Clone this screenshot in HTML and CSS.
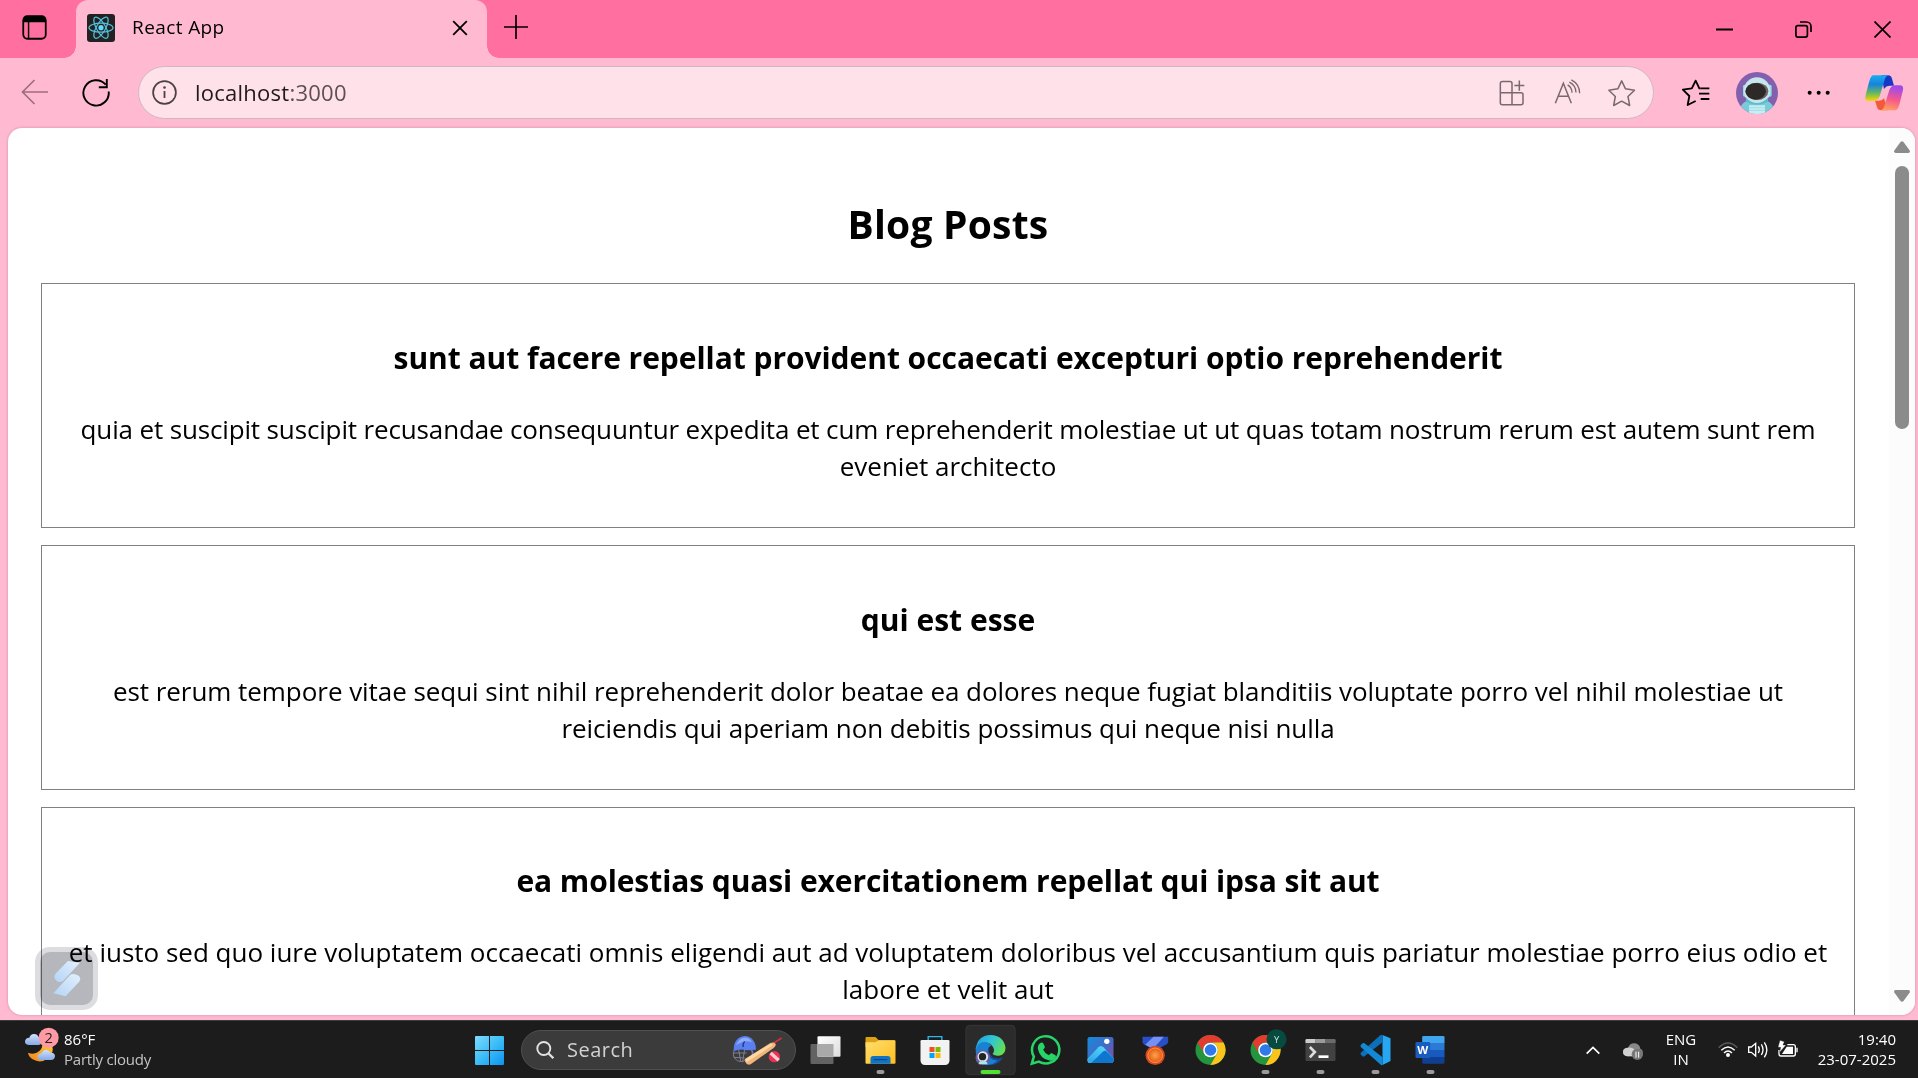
FILE: index.html
```html
<!DOCTYPE html>
<html lang="en">
<head>
<meta charset="utf-8">
<title>React App</title>
<link rel="stylesheet" href="styles.css">
</head>
<body>
<div class="browser">
  <header class="tabstrip">
    <svg class="tab-actions" viewBox="0 0 24 24"><rect x="1.2" y="1.2" width="21.6" height="21.6" rx="4" fill="none" stroke="#000" stroke-width="1.7"/><path d="M1 7V5a4 4 0 0 1 4-4h14a4 4 0 0 1 4 4v2z"/><path d="M6.3 6v17" stroke="#000" stroke-width="1.4"/></svg>
    <div class="tab">
      <svg class="favicon" viewBox="0 0 28 28"><rect width="28" height="28" rx="3" fill="#222"/><g fill="none" stroke="#53c1de" stroke-width="1.2"><ellipse cx="14" cy="13.7" rx="12" ry="4.5"/><ellipse cx="14" cy="13.7" rx="12" ry="4.5" transform="rotate(60 14 13.7)"/><ellipse cx="14" cy="13.7" rx="12" ry="4.5" transform="rotate(120 14 13.7)"/></g><circle cx="14" cy="13.7" r="2.6" fill="#61dafb"/></svg>
      <span class="tab-title">React App</span>
      <svg class="tab-close" viewBox="0 0 16 16"><path d="M1.2 1.2l13.6 13.6M14.8 1.2L1.2 14.8" stroke="#000" stroke-width="1.8"/></svg>
    </div>
    <svg class="new-tab" viewBox="0 0 24 24"><path d="M12 0v24M0 12h24" stroke="#000" stroke-width="1.7"/></svg>
    <div class="window-controls">
      <svg viewBox="0 0 17 17"><path d="M0 8.5h17" stroke="#000" stroke-width="2"/></svg>
      <svg viewBox="0 0 17 17"><g fill="none" stroke="#000" stroke-width="1.7"><rect x=".9" y="4.6" width="11.5" height="11.5" rx="2"/><path d="M5 1h6.500a4.500 4.500 0 0 1 4.500 4.500v5.500"/></g></svg>
      <svg viewBox="0 0 17 17"><path d="M.5.5l16 16M16.500.5l-16 16" stroke="#000" stroke-width="1.7"/></svg>
    </div>
  </header>

  <div class="toolbar">
    <svg class="back" viewBox="0 0 28 26"><path d="M27 13H1.500M13.500 1L1.500 13l12 12" fill="none" stroke="#9c6f80" stroke-width="1.7"/></svg>
    <svg class="reload" viewBox="0 0 28 28"><path d="M23.700 5.600A12.700 12.700 0 1 0 26.700 12.500M24.800 0v8.300h-8" fill="none" stroke="#000" stroke-width="1.9"/></svg>
    <div class="address">
      <svg class="info" viewBox="0 0 25 25"><circle cx="12.500" cy="12.500" r="11.400" fill="none" stroke="#4a4045" stroke-width="1.7"/><circle cx="12.500" cy="7.500" r="1.300" fill="#4a4045"/><path d="M12.500 11v7" stroke="#4a4045" stroke-width="1.8"/></svg>
      <span class="url">localhost<span class="port">:3000</span></span>
      <svg class="slot" viewBox="72 199.500 165 153"><g fill="none" stroke="#7a6870" stroke-width="4.500"><path d="M156 277V249q0-6-6-6h-23q-6 0-6 6v58q0 6 6 6h56q6 0 6-6v-24q0-6-6-6h-62M156 277v36M178 240v31M163 255h30"/></g></svg>
      <svg class="slot" viewBox="237 199.500 165 153"><g fill="none" stroke="#7a6870" stroke-width="4.500"><path d="M286 308l24-60 24 60M295 287h30"/><path d="M323 253q13 8 13 24M328 245q19 9 20 31M334 238q24 12 25 40" stroke-width="4"/></g></svg>
      <svg class="slot" viewBox="402 199.500 165 153"><path d="M485 241l11.500 24 27 4-19.500 19 5 27-24-13-24 13 5-27-19.500-19 27-4z" fill="none" stroke="#7a6870" stroke-width="4.500" stroke-linejoin="round"/></svg>
    </div>
    <div class="actions">
      <svg class="w61" viewBox="615 174 183 210"><g fill="none" stroke="#000" stroke-width="5.500" stroke-linejoin="round"><path d="M722 265h-4l-11-23-11.500 23-27 4 19.500 19-5 27 24-12"/><path d="M722 265h26M717 281h31M722 297h26"/></g></svg>
      <svg class="w62" viewBox="798 174 186 210"><defs><clipPath id="av"><circle cx="891" cy="279" r="63"/></clipPath></defs><g clip-path="url(#av)"><path d="M828 216h126v126H828z" fill="#8360ad"/><path d="M838 345q0-40 32-44h42q32 4 34 44z" fill="#78cbd8"/><rect x="849" y="254" width="14" height="36" rx="5" fill="#8bdce6"/><rect x="920" y="254" width="15" height="36" rx="5" fill="#8bdce6"/><circle cx="891" cy="272" r="40" fill="#c6e6ee"/><path d="M858 293q33 32 66 0v12q-33 18-66 0z" fill="#62bacb"/><ellipse cx="892" cy="274" rx="33" ry="26" fill="#6b6663"/><ellipse cx="887" cy="274" rx="31" ry="25" fill="#2d2927"/><path d="M867 316h48v30h-48z" fill="#c6eef3"/><path d="M867 323h48M867 331h48" stroke="#8fd4df" stroke-width="2"/></g></svg>
      <svg class="w61" viewBox="984 174 183 210"><circle cx="1049" cy="278" r="6"/><circle cx="1076" cy="278" r="6"/><circle cx="1103" cy="278" r="6"/></svg>
      <svg class="w69" viewBox="1167 174 207 210"><defs><linearGradient id="c1" x1="0" y1="0" x2="0" y2="1"><stop offset="0" stop-color="#17aef0"/><stop offset=".35" stop-color="#1683dc"/><stop offset=".7" stop-color="#6ab95c"/><stop offset="1" stop-color="#ffd500"/></linearGradient><linearGradient id="c2" x1=".3" y1="0" x2=".1" y2="1"><stop offset="0" stop-color="#a04be8"/><stop offset=".5" stop-color="#f7588c"/><stop offset="1" stop-color="#ffa95c"/></linearGradient></defs><path d="M1264 226h20q9 0 12 10l6 21h-12q-12 0-18 10z" fill="#1737c4"/><path d="M1284 331h-21q-9 0-12-10l-6-19h12q10 0 15-7z" fill="#f25b38"/><path d="M1240 226h46q-9 2-12 13l-15 50q-5 14-19 14h-14q-13 0-10-14l12-46q5-17 12-17z" fill="url(#c1)"/><path d="M1306 331h-45q9-2 12-13l15-48q5-14 19-14h12q13 0 10 14l-11 44q-5 17-12 17z" fill="url(#c2)"/></svg>
    </div>
  </div>

  <div class="viewport">
    <main class="blog">
      <h1>Blog Posts</h1>
      <article class="post">
        <h3 class="snug">sunt aut facere repellat provident occaecati excepturi optio reprehenderit</h3>
        <p><span class="tight">quia et suscipit suscipit recusandae consequuntur expedita et cum reprehenderit molestiae ut ut quas totam nostrum rerum est autem sunt rem</span><br><span>eveniet architecto</span></p>
      </article>
      <article class="post">
        <h3>qui est esse</h3>
        <p><span class="snug">est rerum tempore vitae sequi sint nihil reprehenderit dolor beatae ea dolores neque fugiat blanditiis voluptate porro vel nihil molestiae ut</span><br><span class="snug">reiciendis qui aperiam non debitis possimus qui neque nisi nulla</span></p>
      </article>
      <article class="post">
        <h3 class="close">ea molestias quasi exercitationem repellat qui ipsa sit aut</h3>
        <p><span>et iusto sed quo iure voluptatem occaecati omnis eligendi aut ad voluptatem doloribus vel accusantium quis pariatur molestiae porro eius odio et</span><br><span>labore et velit aut</span></p>
      </article>
    </main>
    <div class="scrollbar">
      <svg viewBox="0 0 16 12"><path d="M6.500 1q1.500-1.500 3 0l6.200 8.500q.8 2.500-1.500 2.500H1.800q-2.300 0-1.500-2.500z" fill="#8b8b8b"/></svg>
      <div class="thumb"></div>
      <svg class="down" viewBox="0 0 16 12"><path d="M6.500 11q1.500 1.500 3 0l6.200-8.500q.8-2.500-1.500-2.500H1.800q-2.300 0-1.500 2.500z" fill="#8b8b8b"/></svg>
    </div>
  </div>
</div>

<div class="widget"><svg viewBox="105 81 188 188"><defs><linearGradient id="wg" x1="0" y1="1" x2="1" y2="0"><stop offset="0" stop-color="#b4d4f7"/><stop offset="1" stop-color="#e2f0fd"/></linearGradient></defs><path d="M203 123l36 5-49 53q-8 8-19 2-14-10-4-23z" fill="url(#wg)"/><path d="M196 228l-36-9 49-54q7-6 20-1 17 7 8 21z" fill="url(#wg)"/></svg></div>

<footer class="taskbar">
  <div class="weather">
    <svg viewBox="72 300 108 174"><defs><linearGradient id="cl" x1="0" y1="0" x2="0" y2="1"><stop offset="0" stop-color="#d4e2fb"/><stop offset="1" stop-color="#86a9e8"/></linearGradient><linearGradient id="mo" x1="1" y1="0" x2="0" y2="1"><stop offset="0" stop-color="#ffc83c"/><stop offset="1" stop-color="#f0851c"/></linearGradient></defs><path d="M156 375q8 25-12 40-22 17-46 3-12-8-14-20 20 8 34-5 10-9 9-21z" fill="url(#mo)"/><path d="M86 375q-12-1-11-11t13-11q4-12 15-11 9 0 13 9 11 2 10 13-2 11-11 11z" fill="url(#cl)"/><path d="M123 420q-11-1-10-10t12-10q4-11 14-11 9 1 12 9 14-1 14 11-1 11-12 11z" fill="url(#cl)"/><circle cx="146" cy="353" r="30" fill="#ff99a4"/><text x="146" y="369" font-size="44" text-anchor="middle" fill="#222" class="badge">2</text></svg>
    <div class="weather-text"><span>86°F</span><span class="dim">Partly cloudy</span></div>
  </div>

  <div class="apps">
    <svg class="start" viewBox="0 0 29 29"><defs><linearGradient id="wn" x1="0" y1="0" x2="1" y2="1"><stop offset="0" stop-color="#7fdcfd"/><stop offset=".5" stop-color="#3cbdf7"/><stop offset="1" stop-color="#0c93f0"/></linearGradient></defs><path d="M1 0h13v14H0V1q0-1 1-1zM15 0h13q1 0 1 1v13H15zM0 15h14v14H1q-1 0-1-1zM15 15h14v13q0 1-1 1H15z" fill="url(#wn)"/></svg>
    <div class="search">
      <svg class="lens" viewBox="0 0 18 18"><circle cx="7.800" cy="7.500" r="6.500" fill="none" stroke="#e2e2e2" stroke-width="1.900"/><path d="M12.300 12.200l5 5" stroke="#e2e2e2" stroke-width="2.300"/></svg>
      <span class="search-label">Search</span>
      <svg class="cricket" viewBox="843 75 156 96"><g fill="none" stroke="#7e7f95" stroke-width="3"><path d="M852 124q-4 12 0 22 10 14 26 12l14-8M852 132h38M852 145l32 2M866 122l6 34M884 120l-6 38"/></g><path d="M851 122q0-24 15-35 20-12 38 1 14 12 14 34l-28 2q-20-6-38 2z" fill="#5b7ff0"/><path d="M858 108q9-21 25-22 17-1 23 14-19-10-48 8z" fill="#8eabf8"/><path d="M884 97q-7 8-4 17" stroke="#213b9a" stroke-width="4" fill="none"/><path d="M903 122q10 8 0 25l-14 8" fill="none" stroke="#6777c8" stroke-width="5"/><path d="M971 102l24-15" stroke="#d32e43" stroke-width="5"/><path d="M884 151l77-49q11-4 16 3 2 6-6 12l-69 49q-15 5-18-15z" fill="#efb579"/><path d="M886 150l77-46 6 4-79 52z" fill="#ffd7a3"/><circle cx="973" cy="143" r="17" fill="#e93250"/><path d="M962 132l24 22" stroke="#ffc9d4" stroke-width="10"/></svg>
    </div>
    <svg class="app" viewBox="1045.500 30 165 174"><defs><linearGradient id="tv" x1="0" y1="0" x2="1" y2="1"><stop offset="0" stop-color="#fff"/><stop offset="1" stop-color="#dcdcdc"/></linearGradient></defs><rect x="1083" y="102" width="69" height="60" rx="3" fill="#636363"/><rect x="1104" y="79" width="69" height="61" rx="3" fill="url(#tv)"/><path d="M1104 102h48v38h-48z" fill="#a9a9a9"/></svg>
    <svg class="app" viewBox="1210.500 30 165 174"><defs><linearGradient id="fo" x1="0" y1="0" x2="1" y2="1"><stop offset="0" stop-color="#ffdf70"/><stop offset="1" stop-color="#ffbd1c"/></linearGradient></defs><path d="M1248 84q0-3 3-3h27l10 10h48v20h-88z" fill="#dfa112"/><path d="M1248 97h30l10-6h47q3 0 3 3v64q0 3-3 3h-84q-3 0-3-3z" fill="url(#fo)"/><path d="M1263 161v-15q0-8 8-8h44q8 0 8 8v15z" fill="#1173c4"/><path d="M1273 149h40" stroke="#0b3f79" stroke-width="3"/><rect x="1281" y="180" width="24" height="12" rx="6" fill="#9a9a9a"/></svg>
    <svg class="app" viewBox="1375.500 30 165 174"><path d="M1436 96V80h41v16" fill="none" stroke="#28b9ee" stroke-width="4"/><path d="M1413 94q0-4 4-4h79q4 0 4 4v57q0 14-14 14h-59q-14 0-14-14z" fill="#f2f2f2"/><path d="M1440 111h15v15h-15z" fill="#f25022"/><path d="M1458 111h15v15h-15z" fill="#7fba00"/><path d="M1440 129h15v15h-15z" fill="#00a4ef"/><path d="M1458 129h15v15h-15z" fill="#ffb900"/></svg>
    <svg class="app" viewBox="40.500 30 165 174"><defs><linearGradient id="e1" x1="0" y1=".2" x2="1" y2=".6"><stop offset="0" stop-color="#249fe0"/><stop offset=".5" stop-color="#31c5d5"/><stop offset="1" stop-color="#66e04b"/></linearGradient></defs><rect x="49" y="46" width="148" height="148" rx="12" fill="#2b2b2b" stroke="#383838" stroke-width="2.500"/><path d="M118 112q-3 26 18 32 15 4 25-3-13 24-38 24-39-2-45-40z" fill="#124c9b"/><path d="M79 126q-4-30 25-32 14 0 21 13-12 4-10 20 4 26 30 24-16 17-40 13-24-9-26-38z" fill="#1a80d4"/><path d="M79 118q4-42 44-43 40 2 45 38 0 21-20 24-13 1-19-5 8-9 2-20-9-16-27-16-19 1-25 22z" fill="url(#e1)"/><circle cx="100" cy="143" r="22" fill="#73599c"/><circle cx="100" cy="140" r="16" fill="#d5e9f2"/><circle cx="99" cy="140" r="11" fill="#252323"/><path d="M87 163q2-10 8-10h10q8 0 9 10z" fill="#a9e3ec"/><rect x="93" y="180" width="60" height="12" rx="6" fill="#4de133"/></svg>
    <svg class="app" viewBox="205.500 30 165 174"><path d="M247 161l6-21a41 41 0 1 1 15 15z" fill="none" stroke="#26d467" stroke-width="7.500"/><path d="M274 98q5-2 8 3l4 9q1 3-5 9 6 12 17 17l7-7 12 6q4 3 2 7-6 11-17 10-31-5-37-36-1-14 9-18z" fill="#26d467"/></svg>
    <svg class="app" viewBox="370.500 30 165 174"><defs><linearGradient id="ph" x1="0" y1="0" x2="1" y2="1"><stop offset="0" stop-color="#128ddd"/><stop offset=".55" stop-color="#4867c5"/><stop offset="1" stop-color="#8c4c9f"/></linearGradient><linearGradient id="pm" x1="0" y1="1" x2="1" y2="0"><stop offset="0" stop-color="#27a4e6"/><stop offset="1" stop-color="#55d8fc"/></linearGradient></defs><rect x="414" y="81" width="78" height="78" rx="7" fill="url(#ph)"/><path d="M414 147l33-35q7-6 14 0l31 32v8q0 7-7 7h-64q-7 0-7-7z" fill="#45c9f8"/><path d="M415 149l32-37q7-6 14 0l8 8-39 39h-8q-6-1-7-10z" fill="url(#pm)"/><path d="M425 159l35-34q6-5 12 0l20 20v7q0 7-7 7z" fill="#0f76cf"/><circle cx="472" cy="94" r="8" fill="#fff"/></svg>
    <svg class="app" viewBox="535.500 30 165 174"><defs><radialGradient id="md"><stop offset="0" stop-color="#ffa34b"/><stop offset="1" stop-color="#e35a13"/></radialGradient></defs><path d="M579 80h77v15q0 5-5 8l-20 11h-28l-20-11q-4-3-4-8z" fill="#274fc8"/><path d="M612 80h31l-28 32h-14l-14-8z" fill="#7790f3"/><circle cx="617" cy="136" r="29" fill="#d6471a"/><circle cx="617" cy="136" r="22" fill="url(#md)" stroke="#ff9f62" stroke-width="2.500"/></svg>
    <svg class="app" viewBox="700.500 30 165 174"><g id="chrome"><circle cx="783" cy="120" r="45" fill="#24943f"/><path d="M744 97.500a45 45 0 0 1 78 0H783a22 22 0 0 0-19.500 33.500z" fill="#e33b2e"/><path d="M822 97.500a45 45 0 0 1-39 67.500l19.500-34A22.500 22.500 0 0 0 783 97.500z" fill="#fcc31b"/><circle cx="783" cy="120" r="22" fill="#fff"/><circle cx="783" cy="120" r="17.500" fill="#2f79ea"/></g></svg>
    <svg class="app" viewBox="865.500 30 165 174"><use href="#chrome" x="165"/><circle cx="981" cy="88" r="30" fill="#064a40"/><text x="981" y="98" font-size="28" text-anchor="middle" fill="#cfe5df" class="badge">Y</text><rect x="936" y="180" width="24" height="12" rx="6" fill="#9a9a9a"/></svg>
    <svg class="app" viewBox="1030.500 30 165 174"><rect x="1068" y="87" width="90" height="66" rx="4" fill="#424242"/><path d="M1068 99v-8q0-4 4-4h26v12z" fill="#ccc"/><path d="M1098 87h30v12h-30z" fill="#9a9a9a"/><path d="M1128 87h26q4 0 4 4v8h-30z" fill="#6b6b6b"/><path d="M1081 111l15 15-15 16" fill="none" stroke="#ddd" stroke-width="8"/><path d="M1107 140h30" stroke="#fff" stroke-width="8"/><rect x="1101" y="180" width="24" height="12" rx="6" fill="#9a9a9a"/></svg>
    <svg class="app" viewBox="1195.500 30 165 174"><path d="M1299 75l24 10v68l-24 12z" fill="#27a7f2"/><path d="M1299 75v22l-54 42q-3 2-6 0l-5-5q-2-3 0-6l58-52q4-3 7-1z" fill="#0b6fb9"/><path d="M1299 165v-23l-54-42q-3-2-6 0l-5 5q-2 3 0 6l58 52q4 4 7 2z" fill="#1389d6"/><rect x="1266" y="180" width="24" height="12" rx="6" fill="#9a9a9a"/></svg>
    <svg class="app" viewBox="1360.500 30 165 174"><path d="M1418 82q0-4 4-4h59q4 0 4 4v17h-67z" fill="#3fa5ee"/><path d="M1418 99h67v21h-67z" fill="#2b7bd5"/><path d="M1418 120h67v21h-67z" fill="#185abd"/><path d="M1418 141h67v16q0 4-4 4h-59q-4 0-4-4z" fill="#103f91"/><rect x="1398" y="96" width="44" height="48" rx="4" fill="#1a5bbe"/><text x="1420" y="132" font-size="34" font-weight="700" text-anchor="middle" fill="#fff" class="badge">W</text><rect x="1431" y="180" width="24" height="12" rx="6" fill="#9a9a9a"/></svg>
  </div>

  <div class="tray">
    <svg class="chev" viewBox="129 180 60 174"><path d="M140 281l19-19 19 19" fill="none" stroke="#fff" stroke-width="5"/></svg>
    <svg class="cloud" viewBox="240 180 78 174"><path d="M262 289q-14-2-13-15 2-11 15-11 6-14 20-13 15 2 17 16 9 4 7 14-2 9-12 9z" fill="#888"/><path d="M262 289q-14-2-13-15 2-11 15-11 14-2 22 9l12 17z" fill="#d0d0d0"/><circle cx="292" cy="283" r="17" fill="#777"/><path d="M288 275v18M296 275v18" stroke="#fff" stroke-width="3"/></svg>
    <div class="lang"><span>ENG</span><span>IN</span></div>
    <svg class="status" viewBox="528 180 252 174"><g fill="none" stroke="#fff" stroke-width="4.500"><path d="M536 263q28-28 56 0" stroke="#5b5b5b"/><path d="M544 271q20-20 40 0M552 279q12-12 24 0"/></g><circle cx="564" cy="285" r="6" fill="#fff"/><g fill="none" stroke="#fff" stroke-width="4"><path d="M626 261h8l13-11v38l-13-11h-8z"/><path d="M655 259q6 10 0 20M664 253q10 16 0 32M673 247q15 22 0 45"/></g><path d="M742 254h18q6 0 6 6v22q0 6-6 6h-37q-6 0-6-6v-12M771 263v14" fill="none" stroke="#fff" stroke-width="4"/><path d="M740 260h19v22h-33z" fill="#fff"/><path d="M720 241l13 4-4 10h9l-19 22 3-15h-8z" fill="#fff" stroke="#1c1c1c" stroke-width="1"/></svg>
    <div class="clock"><span>19:40</span><span>23-07-2025</span></div>
  </div>
</footer>
</body>
</html>
```
FILE: styles.css
```css
* { box-sizing: border-box; }
body {
  margin: 0;
  width: 1918px;
  height: 1078px;
  overflow: hidden;
  position: relative;
  font-family: "Open Sans", "Noto Sans", sans-serif;
  color: #000;
}
svg { display: block; flex: none; }
span { white-space: nowrap; }

.browser {
  height: 1020px;
  display: flex;
  flex-direction: column;
  background: #ffbad1;
  padding-bottom: 5px;
}

/* Tab strip */
.tabstrip {
  height: 58px;
  flex: none;
  display: flex;
  align-items: flex-start;
  background: #ff6f9f;
  padding-left: 22px;
}
.tab-actions { width: 25px; height: 25px; margin-top: 15px; }
.tab {
  position: relative;
  width: 411px;
  height: 58px;
  margin-left: 29px;
  padding: 0 19px 0 11px;
  display: flex;
  align-items: center;
  background: #ffbad1;
  border-radius: 12px 12px 0 0;
}
.tab::before,
.tab::after {
  content: "";
  position: absolute;
  bottom: 0;
  width: 12px;
  height: 12px;
}
.tab::before { left: -12px; background: radial-gradient(circle at 0 0, transparent 11.500px, #ffbad1 12px); }
.tab::after { right: -12px; background: radial-gradient(circle at 100% 0, transparent 11.500px, #ffbad1 12px); }
.favicon { width: 28px; height: 28px; margin-right: 17px; margin-top: -2px; }
.tab-title { flex: 1; font-size: 19px; line-height: 26px; margin-top: -5px; letter-spacing: .4px; }
.tab-close { width: 16px; height: 16px; margin-top: -2px; }
.new-tab { width: 24px; height: 24px; margin: 15px 0 0 17px; }
.window-controls { display: flex; gap: 62px; margin: 21px 27px 0 auto; }
.window-controls svg { width: 17px; height: 17px; }

/* Toolbar */
.toolbar { height: 70px; flex: none; display: flex; align-items: center; padding-left: 21px; }
.back { width: 28px; height: 26px; margin-top: -2px; }
.reload { width: 28px; height: 28px; margin: -1px 28px 0 33px; }
.address {
  width: 1516px;
  height: 53px;
  margin-top: -2px;
  display: flex;
  align-items: center;
  background: #ffe1ea;
  border: 1px solid #cfb6c0;
  border-radius: 27px;
  padding: 0 4px 0 13px;
}
.info { width: 25px; height: 25px; }
.url { flex: 1; font-size: 22px; line-height: 30px; margin-left: 18px; color: #1f1a1c; letter-spacing: .25px; }
.port { color: #5c4f55; }
.slot { width: 55px; height: 51px; }
.actions { flex: 1; display: flex; justify-content: flex-end; }
.actions svg { height: 70px; }
.w61 { width: 61px; }
.w62 { width: 62px; }
.w69 { width: 69px; }

/* Page */
.viewport {
  flex: 1;
  min-height: 0;
  margin: 0 3px 0 8px;
  display: flex;
  background: #fff;
  border-radius: 14px;
  overflow: hidden;
  box-shadow: 0 0 3px rgba(120, 60, 80, .35);
}
.blog { flex: 1; padding: 0 34px 0 33px; text-align: center; overflow: hidden; }
.blog h1 { margin: 68px 0 31.4px; font-size: 39px; line-height: 56px; letter-spacing: .2px; }
.post { height: 244.67px; margin-bottom: 17px; border: 1px solid #808080; padding-top: 51.6px; }
.post h3 { margin: 0 0 31px; font-size: 30px; line-height: 44px; }
.post p { margin: 0; font-size: 26px; line-height: 37px; }
.snug { letter-spacing: -.05px; }
.post .close { letter-spacing: -.09px; }
.tight { letter-spacing: -.145px; }
.scrollbar {
  width: 26px;
  background: #fcfcfc;
  display: flex;
  flex-direction: column;
  align-items: center;
  padding: 13px 0 13px;
}
.scrollbar svg { width: 16px; height: 12px; }
.thumb { width: 14px; height: 263px; margin-top: 13px; border-radius: 7px; background: #8b8b8b; }
.scrollbar .down { margin-top: auto; }

/* Floating assistant button over the page */
.widget {
  position: absolute;
  left: 35px;
  top: 947px;
  width: 63px;
  height: 63px;
  border: 5px solid #dddde1;
  border-radius: 15px;
  background: #b6b7bd;
  mix-blend-mode: multiply;
}
.widget svg { width: 63px; height: 63px; margin: -5px; }

/* Taskbar */
.taskbar {
  height: 58px;
  display: grid;
  grid-template-columns: 475px auto 1fr;
  background: #1c1c1c;
  border-top: 1px solid #3c3c3c;
  color: #fff;
}
.taskbar > div { margin-top: -1px; }
.weather { display: flex; padding-left: 24px; }
.weather svg { width: 36px; height: 58px; }
.weather-text,
.lang,
.clock { display: flex; flex-direction: column; font-size: 15px; line-height: 20px; padding-top: 9px; }
.weather-text { margin-left: 4px; }
.dim { color: #c4c4c4; letter-spacing: -.22px; }
.apps { display: flex; align-items: center; }
.start { width: 29px; height: 29px; margin-top: 3px; }
.search {
  width: 275px;
  height: 40px;
  margin: 1px 2px 0 17px;
  padding: 0 12px 0 14px;
  display: flex;
  align-items: center;
  background: #3b3b3b;
  border: 1px solid #505050;
  border-radius: 20px;
}
.lens { width: 18px; height: 18px; }
.search-label { flex: 1; margin-left: 13px; font-size: 20px; line-height: 26px; color: #d2d2d2; letter-spacing: .5px; }
.cricket { width: 52px; height: 32px; }
.app { width: 55px; height: 58px; }
.badge { font-family: "Open Sans", "Noto Sans", sans-serif; }
.tray { display: flex; justify-content: flex-end; padding-right: 22px; }
.tray svg { height: 58px; }
.chev { width: 20px; }
.cloud { width: 26px; margin-left: 17px; }
.lang { width: 40px; margin: 0 15px 0 15px; align-items: center; }
.status { width: 84px; }
.clock { width: 80px; margin-left: 16px; align-items: flex-end; }
```
